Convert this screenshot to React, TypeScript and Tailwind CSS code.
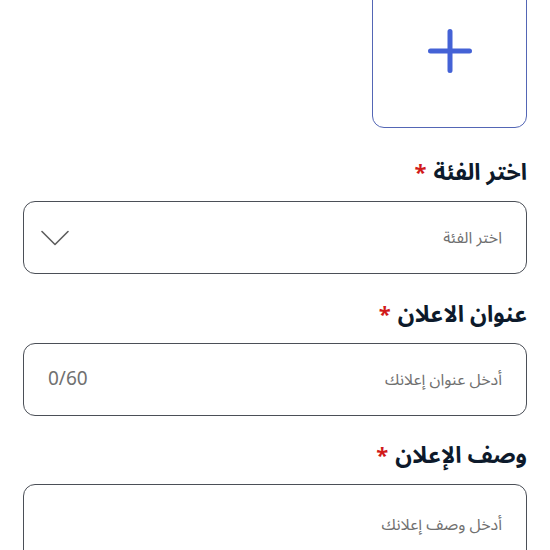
const fontStack = { fontFamily: '"Noto Sans Arabic", "DejaVu Sans", "Noto Sans", sans-serif' };

function FieldLabel({ text }: { text: string }) {
  return (
    <div className="h-[30px] mb-[13px] flex items-center gap-[7px] text-[23px] font-bold text-[#0d1a2b]">
      <span>{text}</span>
      <span className="text-[#d11a1a] text-[22px]">*</span>
    </div>
  );
}

export default function App() {
  return (
    <div dir="rtl" className="w-[550px] h-[550px] overflow-hidden bg-white px-[23px]" style={fontStack}>
      {/* image upload tile */}
      <div className="-mt-[26px] mb-[30px] w-[155px] h-[154px] rounded-[12px] border border-[#5366b5] flex items-center justify-center">
        <svg width="44" height="44" viewBox="0 0 44 44" fill="none" stroke="#4462d6" strokeWidth="5" strokeLinecap="round">
          <path d="M22 2.5v39M2.5 22h39" />
        </svg>
      </div>

      <FieldLabel text="اختر الفئة" />
      <div className="h-[73px] rounded-[12px] border border-[#4b4f57] flex items-center justify-between pr-[24px] pl-[17px]">
        <span className="text-[16px] text-[#707070]">اختر الفئة</span>
        <svg width="28" height="16" viewBox="0 0 28 16" fill="none" stroke="#5e5e5e" strokeWidth="1.6" strokeLinecap="round" strokeLinejoin="round">
          <path d="M1 1.5l13 13 13-13" />
        </svg>
      </div>

      <div className="mt-[26px]">
        <FieldLabel text="عنوان الاعلان" />
        <div className="h-[73px] rounded-[12px] border border-[#4b4f57] flex items-center justify-between pr-[24px] pl-[24px]">
          <span className="text-[16px] text-[#707070]">أدخل عنوان إعلانك</span>
          <span className="text-[19px] text-[#707070]" dir="ltr">0/60</span>
        </div>
      </div>

      <div className="mt-[25px]">
        <FieldLabel text="وصف الإعلان" />
        <div className="h-[120px] rounded-[12px] border border-[#4b4f57] pr-[24px] pt-[28px]">
          <span className="text-[16px] text-[#707070]">أدخل وصف إعلانك</span>
        </div>
      </div>
    </div>
  );
}
